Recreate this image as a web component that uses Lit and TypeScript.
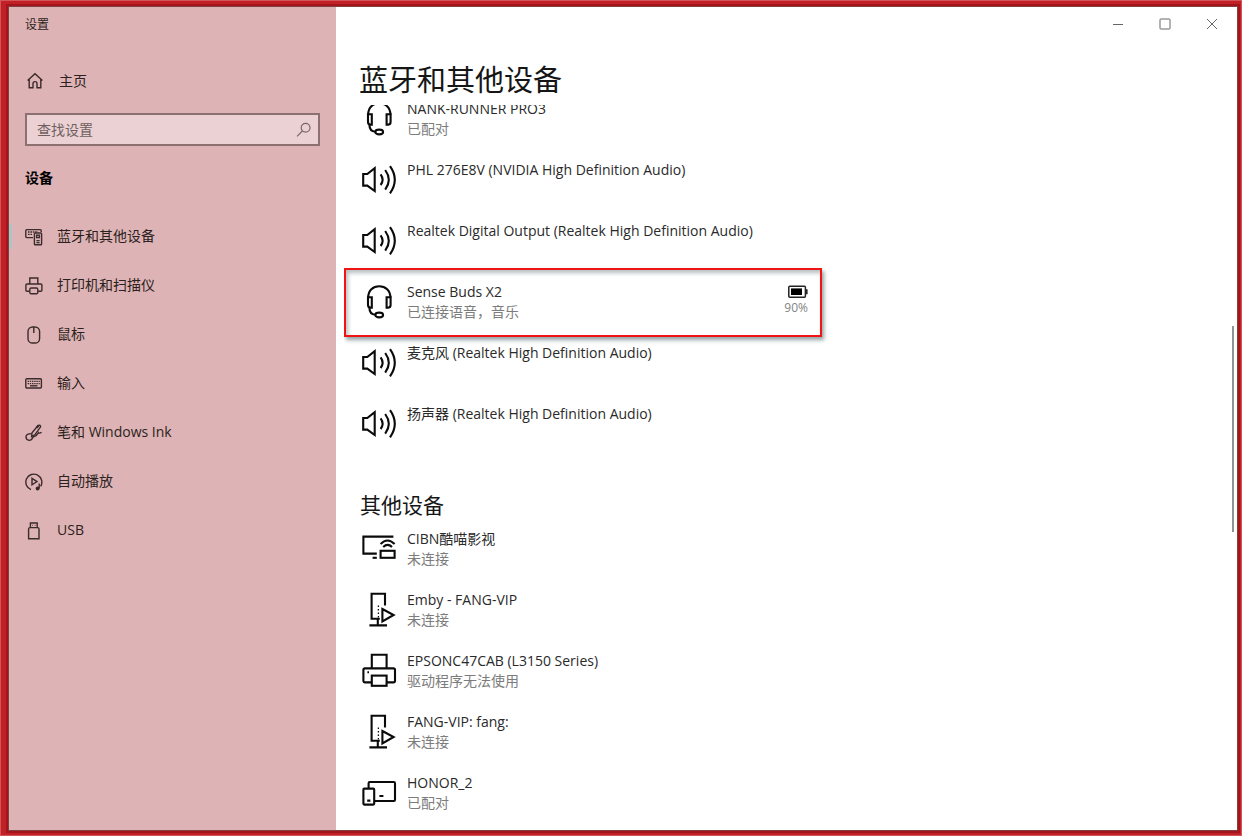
import { LitElement, html, css, svg, nothing } from "lit";
import { customElement, property } from "lit/decorators.js";

/* Device icons, drawn on a 36 x 36 grid. */
const deviceIcons: Record<string, unknown> = {
  headset: svg`
    <path d="M7.2 14.5C7.2 7.6 12 3.3 18.2 3.3S29.4 7.6 29.4 14.5"/>
    <path d="M7 14.2H10.8V24.6H9.2C7.6 24.6 7 23.4 7 21.8Z"/>
    <path d="M29.6 14.2H25.6V24.6H27.4C29 24.6 29.6 23.4 29.6 21.8Z"/>
    <path d="M8.4 24.6C8.4 29 10.4 31.6 14.4 31.8"/>
    <ellipse cx="18.2" cy="32" rx="3.9" ry="2.4"/>`,
  speaker: svg`
    <path d="M2.2 13H6.3L13.7 7.2V30L6.3 24.6H2.2Z"/>
    <path d="M19.6 13.4Q23.6 18.8 19.6 24"/>
    <path d="M24.2 9Q31.4 18.8 24.2 28.6"/>
    <path d="M29 5.2Q38.6 18.8 29 32.4"/>`,
  cast: svg`
    <path d="M32.4 6.6H2.4V23.6H15.8"/>
    <path d="M11.6 27.8H15.8"/>
    <rect x="19.6" y="20.8" width="14" height="7"/>
    <path d="M19.6 14Q26.4 7 33.6 14"/>
    <path d="M22.2 17Q26.6 12.8 31 17"/>`,
  media: svg`
    <path d="M24 14.4V2.8H10.6V27.8H18.8"/>
    <path d="M21.4 18L32.6 24L21.4 30.4Z"/>
    <path d="M16.8 28V34.2M8.4 34.4H26"/>
    <path d="M17.4 14.4V27" stroke-width="1.3" stroke-dasharray="1.6 1.9"/>`,
  printer: svg`
    <path d="M10.8 16.4V2.8H25.6V16.4"/>
    <path d="M10.4 30.4H4Q2.4 30.4 2.4 28.8V18Q2.4 16.4 4 16.4H32.4Q34 16.4 34 18V28.8Q34 30.4 32.4 30.4H26"/>
    <rect x="10.8" y="23.6" width="14.8" height="10.2"/>
    <path d="M6.4 20.3H8"/>`,
  tablet: svg`
    <path d="M7.6 14V9.2Q7.6 8 8.8 8H32.8Q34 8 34 9.2V25.8Q34 27 32.8 27H13.4"/>
    <rect x="2.4" y="14.6" width="10.8" height="16" rx="1"/>
    <path d="M18.4 22H22.4M6.2 26.6H9.4"/>`,
};

/* Sidebar icons, drawn on an 18 x 18 grid. */
const navIcons: Record<string, unknown> = {
  home: svg`<path d="M1.6 8.6L9 1.8L16.4 8.6M3.2 7.4V15.8H7V11.4Q7 9.6 9 9.6T11 11.4V15.8H14.8V7.4"/>`,
  devices: svg`
    <path d="M8 9.6H1.8Q.8 9.6.8 8.6V2.6Q.8 1.6 1.8 1.6H15.2Q16.2 1.6 16.2 2.6V4"/>
    <path d="M3 4H13M3 6.4H7.6" stroke-dasharray="1.6 .8"/>
    <rect x="9.4" y="5" width="7.2" height="11.8" rx=".8"/>
    <rect x="11.6" y="7.2" width="2.8" height="2.4"/>
    <path d="M11.4 12.6H14.6M11.4 14.6H14.6"/>`,
  printer: svg`
    <path d="M4.8 7V1H12.8V7"/>
    <path d="M4.4 14.2H2Q.9 14.2.9 13.2V8Q.9 7 2 7H15.8Q16.9 7 16.9 8V13.2Q16.9 14.2 15.8 14.2H13.2"/>
    <rect x="4.8" y="11" width="8" height="5.8" rx="1.4"/>`,
  mouse: svg`<rect x="3" y="1" width="11.6" height="16" rx="4.6"/><path d="M8.8 1.2V7"/>`,
  keyboard: svg`
    <rect x=".8" y="3.8" width="15.6" height="9.2" rx="1"/>
    <path d="M2.6 6.4H14.8M2.6 8.6H14.8" stroke-dasharray="1.4 .8"/>
    <path d="M5 10.8H12.4"/>`,
  pen: svg`
    <path d="M6.6 12.6L7 8.8L13.2 1.4Q15.6.6 15.6 2.8L9.8 10.8Z"/>
    <path d="M11.4 3.8L13.6 1.8" stroke-width="2.2"/>
    <path d="M6.4 9.6Q1 9.6 1 12.8T4.2 16.4Q7 16.2 8 13Q11.8 12 13.6 8.6Q14.6 9.8 16.6 8.2"/>`,
  autoplay: svg`
    <path d="M6 16.6A8 8 0 1 1 15.6 13.4"/>
    <path d="M7 5.4L12 8.6L7 11.8Z"/>
    <path d="M14.2 10.6V15.4"/>
    <circle cx="12.6" cy="15.6" r="1.3" fill="currentColor"/>`,
  usb: svg`
    <path d="M5.4 5.6V1H12.2V5.6"/>
    <path d="M3.6 16.8V7Q3.6 5.6 5 5.6H12.6Q14 5.6 14 7V16.8Z"/>
    <path d="M7.2 3.4H7.8M9.8 3.4H10.4"/>`,
};

interface Device {
  icon: string;
  name: string;
  status?: string;
  battery?: number;
}

const audioDevices: Device[] = [
  { icon: "headset", name: "NANK-RUNNER PRO3", status: "已配对" },
  { icon: "speaker", name: "PHL 276E8V (NVIDIA High Definition Audio)" },
  { icon: "speaker", name: "Realtek Digital Output (Realtek High Definition Audio)" },
  { icon: "headset", name: "Sense Buds X2", status: "已连接语音，音乐", battery: 90 },
  { icon: "speaker", name: "麦克风 (Realtek High Definition Audio)" },
  { icon: "speaker", name: "扬声器 (Realtek High Definition Audio)" },
];

const otherDevices: Device[] = [
  { icon: "cast", name: "CIBN酷喵影视", status: "未连接" },
  { icon: "media", name: "Emby - FANG-VIP", status: "未连接" },
  { icon: "printer", name: "EPSONC47CAB (L3150 Series)", status: "驱动程序无法使用" },
  { icon: "media", name: "FANG-VIP: fang:", status: "未连接" },
  { icon: "tablet", name: "HONOR_2", status: "已配对" },
];

const navItems = [
  { icon: "devices", label: "蓝牙和其他设备" },
  { icon: "printer", label: "打印机和扫描仪" },
  { icon: "mouse", label: "鼠标" },
  { icon: "keyboard", label: "输入" },
  { icon: "pen", label: "笔和 Windows Ink" },
  { icon: "autoplay", label: "自动播放" },
  { icon: "usb", label: "USB" },
];

@customElement("device-row")
class DeviceRow extends LitElement {
  @property({ attribute: false }) device!: Device;

  static styles = css`
    :host {
      display: block;
      height: 61px;
    }
    .row {
      display: flex;
      gap: 10px;
      height: 100%;
      position: relative;
    }
    .icon {
      flex: none;
      width: 36px;
      height: 36px;
      margin-top: 1px;
      fill: none;
      stroke: #0a0a0a;
      stroke-width: 2.1;
    }
    .text {
      flex: 1;
      line-height: 20px;
      white-space: nowrap;
    }
    .name {
      color: #2a2a2a;
    }
    .status {
      color: #7c7c7c;
    }
    .power {
      display: flex;
      flex-direction: column;
      align-items: flex-end;
      color: #848484;
      font-size: 12px;
      line-height: 18px;
      padding-top: 3px;
    }
    .battery {
      width: 20px;
      height: 14px;
    }
    .mark {
      position: absolute;
      inset: -14px -14px 6px -17px;
      border: 2px solid #f01414;
      box-shadow: 2px 3px 4px rgba(40, 70, 70, 0.5), inset 2px 3px 4px rgba(40, 70, 70, 0.35);
      pointer-events: none;
    }
  `;

  render() {
    const d = this.device;
    return html`<div class="row">
      <svg class="icon" viewBox="0 0 36 36" aria-hidden="true">${deviceIcons[d.icon]}</svg>
      <div class="text">
        <div class="name">${d.name}</div>
        ${d.status ? html`<div class="status">${d.status}</div>` : nothing}
      </div>
      ${d.battery
        ? html`<div class="power">
              <svg class="battery" viewBox="0 0 20 14" aria-hidden="true">
                <rect x=".8" y="1.2" width="16.6" height="11" rx="1" fill="none" stroke="#222" stroke-width="1.5" />
                <rect x="3" y="3.4" width="11" height="6.6" fill="#000" />
                <path d="M18 4.2H19.6V9.2H18Z" fill="#222" />
              </svg>
              <span>${d.battery}%</span>
            </div>
            <div class="mark"></div>`
        : nothing}
    </div>`;
  }
}

@customElement("app-root")
class AppRoot extends LitElement {
  static styles = css`
    :host {
      display: block;
      height: 100vh;
      box-sizing: border-box;
      padding: 7px 5px 6px 9px;
      background: #c02026;
      box-shadow: inset 0 0 0 1px #d2555a;
      font-family: "Open Sans", "Noto Sans CJK SC", sans-serif;
      font-size: 14px;
      color: #2b1f20;
    }
    .window {
      display: flex;
      height: 100%;
      position: relative;
      background: #fff;
      box-shadow: 0 0 0 1px #84403f, 0 0 0 3px #a3151b;
    }
    .side {
      flex: 0 0 327px;
      box-sizing: border-box;
      padding: 0 16px;
      background: #deb3b5;
    }
    .app-name {
      padding-top: 8px;
      font-size: 12px;
      line-height: 20px;
    }
    .home {
      display: flex;
      align-items: center;
      gap: 15px;
      margin-top: 29px;
      height: 34px;
      padding-left: 1px;
    }
    a {
      color: inherit;
      text-decoration: none;
    }
    .glyph {
      flex: none;
      width: 18px;
      height: 18px;
      fill: none;
      stroke: #3a2b2c;
      stroke-width: 1.4;
    }
    .search {
      display: flex;
      align-items: center;
      height: 33px;
      box-sizing: border-box;
      margin-top: 15px;
      padding: 0 6px 0 10px;
      border: 2px solid #8c7072;
      background: #ebd1d3;
    }
    .field {
      flex: 1;
      min-width: 0;
      border: 0;
      padding: 0;
      outline: 0;
      background: none;
      font: inherit;
      line-height: 20px;
    }
    .field::placeholder {
      color: #6f5f60;
      opacity: 1;
    }
    .find {
      border: 0;
      padding: 0;
      background: none;
      width: 16px;
      height: 16px;
    }
    .find-icon {
      display: block;
      fill: none;
      stroke: #7b6768;
      stroke-width: 1.2;
    }
    .side-title {
      margin: 22px 0 0;
      font-size: 14px;
      font-weight: 700;
      line-height: 20px;
      color: #000;
    }
    .nav {
      margin: 24px -16px 0;
    }
    .item {
      display: flex;
      align-items: center;
      gap: 14px;
      height: 49px;
      padding-left: 16px;
      position: relative;
    }
    .label {
      line-height: 20px;
      padding-bottom: 1px;
    }
    .item.current::before {
      content: "";
      position: absolute;
      left: 0;
      top: 12px;
      width: 3px;
      height: 25px;
      background: #b0c4c4;
    }
    .main {
      flex: 1;
      min-width: 0;
      display: flex;
      flex-direction: column;
      padding-left: 25px;
    }
    .caption {
      display: flex;
      justify-content: flex-end;
      height: 33px;
      padding-right: 2px;
    }
    .caption-button {
      width: 47px;
      padding: 0;
      border: 0;
      background: none;
      display: grid;
      place-items: center;
    }
    .caption-icon {
      width: 12px;
      height: 12px;
      fill: none;
      stroke: #666;
    }
    .page-title {
      margin: 0 0 5px -2px;
      padding-top: 20px;
      font-size: 29px;
      font-weight: 400;
      line-height: 40px;
      color: #161616;
    }
    .list {
      flex: 1;
      min-height: 0;
      overflow: hidden;
      margin-left: -17px;
      padding-left: 17px;
    }
    .group {
      width: 447px;
      max-width: 100%;
    }
    .scrolled {
      margin-top: -6px;
    }
    .group-title {
      margin: 26px 0 10px -1px;
      font-size: 21px;
      font-weight: 400;
      line-height: 28px;
      color: #161616;
    }
    .thumb {
      position: absolute;
      right: 3px;
      top: 38.8%;
      width: 2px;
      height: 25%;
      background: #8f9494;
    }
  `;

  render() {
    return html`<div class="window">
      <aside class="side">
        <div class="app-name">设置</div>
        <a class="home" href="#home">
          <svg class="glyph" viewBox="0 0 18 18" aria-hidden="true">${navIcons.home}</svg>
          <span class="label">主页</span>
        </a>
        <div class="search">
          <input class="field" type="text" placeholder="查找设置" aria-label="查找设置" />
          <button class="find" aria-label="查找">
            <svg class="find-icon" width="16" height="16" viewBox="0 0 16 16">
              <circle cx="9.6" cy="5.8" r="4.4" />
              <path d="M6.4 9L1 14.4" />
            </svg>
          </button>
        </div>
        <h2 class="side-title">设备</h2>
        <nav class="nav">
          ${navItems.map(
            (n, i) => html`<a class="item ${i === 0 ? "current" : ""}" href="#${n.icon}">
              <svg class="glyph" viewBox="0 0 18 18" aria-hidden="true">${navIcons[n.icon]}</svg>
              <span class="label">${n.label}</span>
            </a>`,
          )}
        </nav>
      </aside>
      <main class="main">
        <div class="caption">
          <button class="caption-button" aria-label="最小化">
            <svg class="caption-icon" viewBox="0 0 12 12"><path d="M1 6.5H11" /></svg>
          </button>
          <button class="caption-button" aria-label="最大化">
            <svg class="caption-icon" viewBox="0 0 12 12"><rect x="1" y="1" width="10" height="10" rx=".6" /></svg>
          </button>
          <button class="caption-button" aria-label="关闭">
            <svg class="caption-icon" viewBox="0 0 12 12"><path d="M1 1L11 11M11 1L1 11" /></svg>
          </button>
        </div>
        <h1 class="page-title">蓝牙和其他设备</h1>
        <div class="list">
          <div class="group scrolled">
            ${audioDevices.map((d) => html`<device-row .device=${d}></device-row>`)}
          </div>
          <h2 class="group-title">其他设备</h2>
          <div class="group">
            ${otherDevices.map((d) => html`<device-row .device=${d}></device-row>`)}
          </div>
        </div>
      </main>
      <div class="thumb"></div>
    </div>`;
  }
}
